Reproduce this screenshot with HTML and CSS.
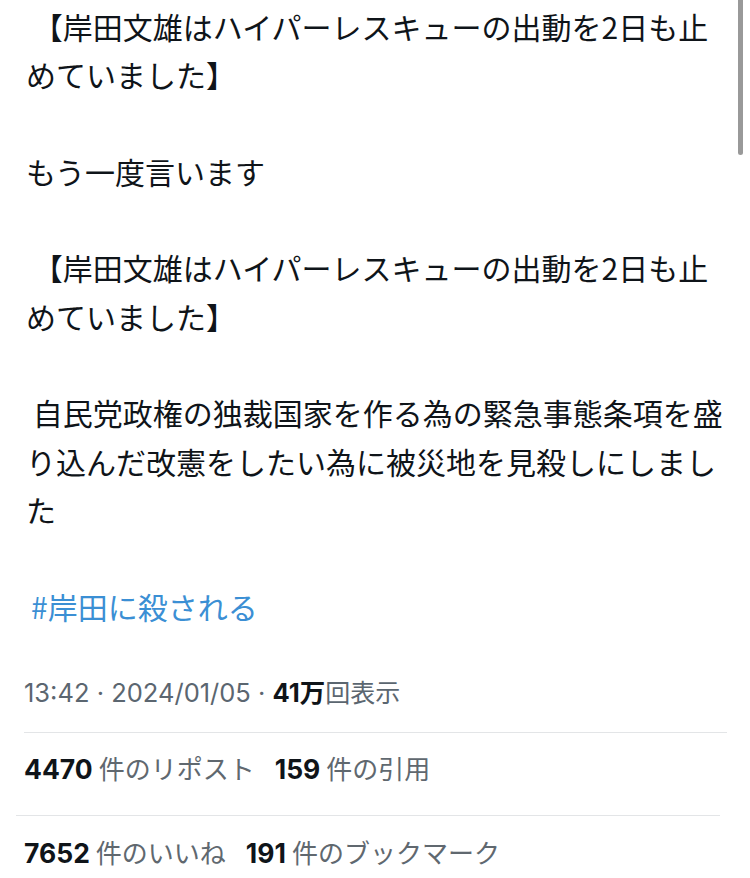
FILE: index.html
```html
<!DOCTYPE html>
<html lang="ja">
<head>
<meta charset="UTF-8">
<title>ポスト</title>
<link rel="stylesheet" href="styles.css">
</head>
<body>
<div class="tweet">
  <p class="tweet-text"> 【岸田文雄はハイパーレスキューの出動を2日も止めていました】

もう一度言います

 【岸田文雄はハイパーレスキューの出動を2日も止めていました】

 自民党政権の独裁国家を作る為の緊急事態条項を盛り込んだ改憲をしたい為に被災地を見殺しにしました</p>
  <p class="tweet-tags"><a class="hashtag" href="#">#岸田に殺される</a></p>
  <div class="meta">13:42 · 2024/01/05 · <b>41万</b><span class="ja">回表示</span></div>
  <div class="stats stats-first">
    <span class="stat"><b>4470</b><span class="label">件のリポスト</span></span>
    <span class="stat"><b>159</b><span class="label">件の引用</span></span>
  </div>
  <div class="stats stats-last">
    <span class="stat"><b>7652</b><span class="label">件のいいね</span></span>
    <span class="stat"><b>191</b><span class="label">件のブックマーク</span></span>
  </div>
</div>
<div class="scrollbar"></div>
</body>
</html>
```

FILE: styles.css
```css
body {
  margin: 0;
  background: #fff;
  color: #0f1419;
  font-family: "Noto Sans CJK JP", sans-serif;
  overflow: hidden;
}
.tweet {
  width: 750px;
}
.tweet-text,
.tweet-tags {
  margin: 0;
  width: 705px;
  font-size: 30px;
  line-height: 48.3px;
  white-space: pre-wrap;
}
.tweet-text {
  padding: 2px 0 0 26px;
}
.tweet-tags {
  margin-top: 48.3px;
  padding-left: 31px;
}
.hashtag {
  color: #3b8fd4;
  text-decoration: none;
}
.meta {
  margin: 43px 23px 0 24px;
  padding-bottom: 19px;
  border-bottom: 1px solid #e3e5e7;
  font-family: Inter, "Noto Sans CJK JP", sans-serif;
  font-size: 25.5px;
  line-height: 40px;
  color: #5b6670;
}
.meta b {
  color: #0f1419;
}
.meta .ja {
  font-size: 25px;
}
.stats {
  display: flex;
  gap: 20px;
  line-height: 40px;
  border-bottom: 1px solid #e3e5e7;
}
.stats-first {
  margin: 0 30px 0 16px;
  padding: 15px 0 23px 8px;
}
.stats-last {
  padding: 16px 0 7px 24px;
}
.stat b {
  font-family: Inter, sans-serif;
  font-size: 26.5px;
  color: #0f1419;
}
.label {
  margin-left: 6px;
  font-size: 26px;
  color: #60686f;
}
.scrollbar {
  position: absolute;
  top: 0;
  left: 738px;
  width: 5px;
  height: 155px;
  border-radius: 0 0 3px 3px;
  background: #999;
}
```
